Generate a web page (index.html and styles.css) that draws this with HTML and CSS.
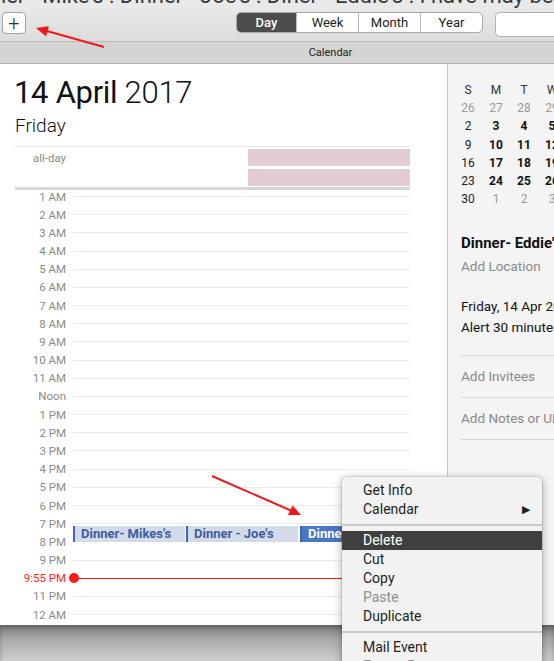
FILE: index.html
```html
<!DOCTYPE html>
<html lang="en">
<head>
  <meta charset="UTF-8"/>
  <meta name="viewport" content="width=device-width,initial-scale=1.0"/>
  <title>Calendar - Day</title>
  <link rel="stylesheet" href="styles.css">
</head>
<body>
  <div class="strip"><span>ner - Mike's : Dinner - Joe's : Diner - Eddie's : I have may be</span></div>
  <header class="toolbar">
    <button class="btn-add">+</button>
    <nav class="seg">
      <span class="on">Day</span><span>Week</span><span>Month</span><span>Year</span>
    </nav>
    <div class="search"></div>
  </header>
  <div class="titlebar">Calendar</div>

  <main class="main">
    <section class="day">
      <h1 class="date"><b>14 April</b> 2017</h1>
      <h2 class="weekday">Friday</h2>
      <div class="allday">
        <span class="lbl">all-day</span>
        <div class="allday-ev"><i></i><i></i></div>
      </div>
      <div class="hours">
        <div class="row"><span>1 AM</span><i></i></div>
        <div class="row"><span>2 AM</span><i></i></div>
        <div class="row"><span>3 AM</span><i></i></div>
        <div class="row"><span>4 AM</span><i></i></div>
        <div class="row"><span>5 AM</span><i></i></div>
        <div class="row"><span>6 AM</span><i></i></div>
        <div class="row"><span>7 AM</span><i></i></div>
        <div class="row"><span>8 AM</span><i></i></div>
        <div class="row"><span>9 AM</span><i></i></div>
        <div class="row"><span>10 AM</span><i></i></div>
        <div class="row"><span>11 AM</span><i></i></div>
        <div class="row"><span>Noon</span><i></i></div>
        <div class="row"><span>1 PM</span><i></i></div>
        <div class="row"><span>2 PM</span><i></i></div>
        <div class="row"><span>3 PM</span><i></i></div>
        <div class="row"><span>4 PM</span><i></i></div>
        <div class="row"><span>5 PM</span><i></i></div>
        <div class="row"><span>6 PM</span><i></i></div>
        <div class="row"><span>7 PM</span><i></i></div>
        <div class="row"><span>8 PM</span><i></i></div>
        <div class="row"><span>9 PM</span><i></i></div>
        <div class="row now"><span>9:55 PM</span><i></i></div>
        <div class="row"><span>11 PM</span><i></i></div>
        <div class="row"><span>12 AM</span><i></i></div>
        <div class="events">
          <div class="ev">Dinner- Mikes's</div>
          <div class="ev">Dinner - Joe's</div>
          <div class="ev sel">Dinner- Eddie's</div>
        </div>
      </div>
    </section>

    <aside class="side">
      <div class="mini">
        <span class="h">S</span><span class="h">M</span><span class="h">T</span><span class="h">W</span><span class="h">T</span><span class="h">F</span><span class="h">S</span>
        <span class="o">26</span><span class="o">27</span><span class="o">28</span><span class="o">29</span><span class="o">30</span><span class="o">31</span><span>1</span>
        <span>2</span><b>3</b><b>4</b><b>5</b><b>6</b><b>7</b><span>8</span>
        <span>9</span><b>10</b><b>11</b><b>12</b><b>13</b><b>14</b><span>15</span>
        <span>16</span><b>17</b><b>18</b><b>19</b><b>20</b><b>21</b><span>22</span>
        <span>23</span><b>24</b><b>25</b><b>26</b><b>27</b><b>28</b><span>29</span>
        <span>30</span><span class="o">1</span><span class="o">2</span><span class="o">3</span><span class="o">4</span><span class="o">5</span><span class="o">6</span>
      </div>
      <div class="info">
        <div class="title">Dinner- Eddie's</div>
        <div class="muted">Add Location</div>
        <div class="when">Friday, 14 Apr 2017 9:00 PM to 10:00 PM</div>
        <div>Alert 30 minutes before start</div>
        <div class="field">Add Invitees</div>
        <div class="field">Add Notes or URL</div>
      </div>
    </aside>
  </main>
  <div class="desktop"></div>

  <ul class="menu">
    <li>Get Info</li>
    <li class="sub">Calendar</li>
    <li class="sep"></li>
    <li class="hl">Delete</li>
    <li>Cut</li>
    <li>Copy</li>
    <li class="dim">Paste</li>
    <li>Duplicate</li>
    <li class="sep"></li>
    <li>Mail Event</li>
    <li class="dim">Export Event…</li>
  </ul>

  <svg class="arrows" width="554" height="661" viewBox="0 0 554 661">
    <line x1="104" y1="47" x2="45" y2="30.5" stroke="#f01818" stroke-width="2"/>
    <polygon points="36,28 48.9,26.2 46.1,36.4" fill="#f01818"/>
    <line x1="212" y1="476" x2="292" y2="511" stroke="#f01818" stroke-width="2"/>
    <polygon points="301,515 288,515 292.5,505.4" fill="#f01818"/>
  </svg>
</body>
</html>
```
FILE: styles.css
```css
*{margin:0;padding:0;box-sizing:border-box;}
html,body{width:554px;height:661px;overflow:hidden;}
body{font-family:'Roboto','Liberation Sans',sans-serif;color:#1f1f1f;background:#cfcfcf;position:relative;}

.strip{height:10px;overflow:hidden;background:#e9e9e9;white-space:nowrap;}
.strip span{display:block;font-size:22px;line-height:22px;margin:-15px 0 0 -6px;color:#3a3a3a;}

.toolbar{height:32px;display:flex;align-items:flex-start;padding-top:2px;background:linear-gradient(#e8e8e8,#dcdcdc);border-bottom:1px solid #b9b9b9;}
.btn-add{width:24px;height:22px;margin-left:2px;background:#fff;border:1px solid #a2a2a2;border-radius:4px;font:300 20px/18px 'Roboto',sans-serif;color:#333;}
.seg{display:flex;margin-left:210px;height:21px;border:1px solid #a8a8a8;border-radius:5px;overflow:hidden;background:#fff;}
.seg span{font-size:13px;line-height:19px;text-align:center;color:#222;border-left:1px solid #b9b9b9;width:62px;}
.seg span:first-child{border-left:0;width:59px;}
.seg .on{background:#4c4c4c;color:#fff;font-weight:500;}
.search{margin-left:12px;flex:1;height:25px;background:#fff;border:1px solid #b3b3b3;border-right:0;border-radius:5px 0 0 5px;}

.titlebar{height:22px;background:#d4d4d4;border-bottom:1px solid #b3b3b3;font-size:11px;line-height:21px;text-align:center;padding-left:107px;color:#222;}

.main{height:561px;display:flex;background:#fff;}
.day{width:447px;padding:0 37px 0 15px;}
.date{font-size:31px;font-weight:300;letter-spacing:-.3px;line-height:36px;margin:11px 0 0 -1px;color:#111;}
.date b{font-weight:400;}
.weekday{font-size:19px;font-weight:300;line-height:24px;margin-top:3px;color:#111;}
.allday{display:flex;border-top:1px solid #e3e3e3;border-bottom:3px solid #d6d6d6;height:44px;margin-top:8px;}
.allday .lbl{width:51px;text-align:right;font-size:11.5px;color:#8a8a8a;padding-top:4px;}
.allday-ev{flex:1;padding:2px 0 0 182px;display:flex;flex-direction:column;gap:3px;}
.allday-ev i{height:17px;background:#e4ccd3;}

.hours{position:relative;margin-top:-2.5px;}
.row{height:18.18px;display:flex;align-items:center;}
.row span{width:51px;text-align:right;font-size:11.5px;color:#8a8a8a;white-space:nowrap;}
.row i{flex:1;height:1px;background:#ebebeb;margin-left:7px;}
.row.now span{color:#ff2a1a;}
.row.now i{background:#f5180f;margin-left:8px;position:relative;}
.row.now i::before{content:'';position:absolute;left:-5px;top:-4.5px;width:10px;height:10px;border-radius:50%;background:#ff1a12;}

.events{position:absolute;left:58px;top:338.5px;display:flex;gap:1px;}
.ev{width:112px;height:16px;background:#d3dbeb;border-left:2px solid #3d66b6;font-size:13px;font-weight:700;line-height:16px;padding-left:6px;color:#3c5d9c;white-space:nowrap;overflow:hidden;}
.ev.sel{margin-left:1px;background:#4a76c3;border-left-color:#3d66b6;color:#fff;}

.side{flex:1;background:#f4f4f4;border-left:1px solid #c9c9c9;overflow:hidden;}
.mini{display:grid;grid-template-columns:repeat(7,28px);grid-auto-rows:18.2px;padding:17px 0 0 6px;width:210px;font-size:12px;align-items:center;justify-items:center;color:#222;}
.mini .h{color:#333;}
.mini .o{color:#9a9a9a;}
.mini b{font-weight:700;color:#111;}
.info{padding:24px 0 0 13px;font-size:13.5px;line-height:21px;white-space:nowrap;color:#111;}
.info .title{font-size:15px;font-weight:700;line-height:22px;}
.info .muted{color:#8a8a8a;margin-top:2px;}
.info .when{margin-top:19px;}
.info .field{color:#8a8a8a;border-top:1px solid #d6d6d6;margin-top:16px;padding-top:10px;}
.info .field:last-child{border-bottom:1px solid #d6d6d6;padding-bottom:10px;margin-top:0;}
.info .field:nth-child(5){margin-top:17px;padding-bottom:10px;}

.desktop{height:36px;background:linear-gradient(#7e7e7e,#a9a9a9 40%,#cfcfcf);box-shadow:inset 0 3px 4px rgba(0,0,0,.25);}

.menu{position:absolute;left:342px;top:477px;width:200px;height:200px;list-style:none;background:#f2f2f2;border-radius:5px;padding-top:4px;box-shadow:0 2px 10px rgba(0,0,0,.35),0 0 0 1px rgba(0,0,0,.08);font-size:14px;color:#1e1e1e;}
.menu li{height:19px;line-height:19px;padding-left:21px;position:relative;}
.menu .sub::after{content:'\25B6';position:absolute;right:12px;font-size:11px;color:#222;}
.menu .sep{height:12px;}
.menu .sep::before{content:'';position:absolute;left:0;right:0;top:5px;height:2px;background:#c9c9c9;}
.menu .hl{background:#3f3f3f;color:#fff;}
.menu .dim{color:#8f8f8f;}

.arrows{position:absolute;left:0;top:0;pointer-events:none;}
```
